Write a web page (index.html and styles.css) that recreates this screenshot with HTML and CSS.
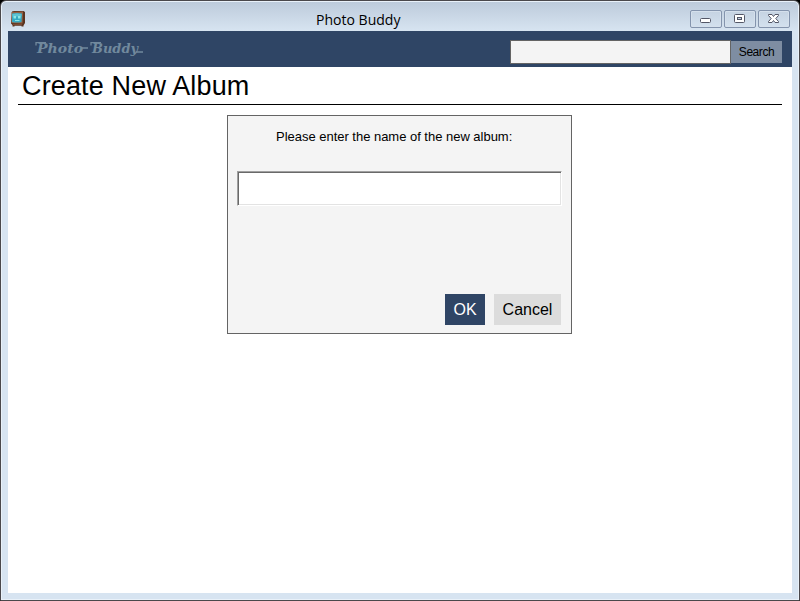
FILE: index.html
```html
<!DOCTYPE html>
<html lang="en">
<head>
<meta charset="utf-8">
<title>Photo Buddy</title>
<link rel="stylesheet" href="styles.css">
</head>
<body>
<div class="window">
  <div class="titlebar">
    <svg class="app-icon" width="16" height="18" viewBox="0 0 16 18">
      <path d="M2 1.500 L4 1 H13.500 L15 2 V13 L13.500 15.500 V16.500 H11.500 V15.800 H4.500 V16.500 H2.500 V15 L1 13.500Z" fill="#5a3420"/>
      <path d="M1.500 2 L13 1.500 L12.500 13.500 L1.500 13Z" fill="#966043"/>
      <path d="M2 3.500 Q7 2.500 12 3.500 L11.500 12 Q7 13 2 12Z" fill="#35a9c3"/>
      <path d="M2.500 4 Q7 3 11.500 4 L11.200 6.500 H2.500Z" fill="#5fc3d3"/>
      <path d="M3.500 6 H6 V8.500 H3.500Z M8 6 H10.500 V8.500 H8Z M5 10 H9.500 V11 H5Z" fill="#8de6e6"/>
      <path d="M3 14.500 H12" stroke="#7e4930"/>
    </svg>
    <div class="caption"><svg width="90" height="24"><text x="1" y="18" textLength="84.500" lengthAdjust="spacingAndGlyphs">Photo Buddy</text></svg></div>
    <div class="controls">
      <div class="control"><svg width="30" height="16"><rect x="9.500" y="7.500" width="10" height="4" rx="1" fill="#fff" stroke="#535666"/></svg></div>
      <div class="control"><svg width="30" height="16"><rect x="9.500" y="3.500" width="10" height="8" rx="1" fill="#fff" stroke="#535666"/><rect x="12.500" y="6.500" width="4" height="2" fill="#c4d3e5" stroke="#535666"/></svg></div>
      <div class="control"><svg width="30" height="16"><path d="M9.500 3.500 H13 L14.500 5.500 L16 3.500 H19.500 V4.500 L16.800 7.500 L19.500 10.500 V11.500 H16 L14.500 9.500 L13 11.500 H9.500 V10.500 L12.200 7.500 L9.500 4.500Z" fill="#fff" stroke="#535666"/></svg></div>
    </div>
  </div>
  <main class="client">
    <header class="header">
      <svg class="logo" width="112" height="24" viewBox="0 0 112 24">
        <text x="3" y="15" textLength="46" lengthAdjust="spacingAndGlyphs">Photo</text>
        <text x="58" y="15" textLength="46" lengthAdjust="spacingAndGlyphs">Buddy</text>
        <path d="M2 7.500 V4.700 H12 M47 10 H54 M57 7.500 V4.700 H67 M102 14 H109" fill="none" stroke="#71899d" stroke-width="1.300"/>
      </svg>
      <div class="search">
        <input class="query" type="text" aria-label="Search">
        <button class="go">Search</button>
      </div>
    </header>
    <h1 class="heading">Create New Album</h1>
    <section class="dialog">
      <label class="prompt" for="album">Please enter the name of the new album:</label>
      <input class="name" id="album" type="text">
      <div class="actions">
        <button class="button ok">OK</button>
        <button class="button cancel">Cancel</button>
      </div>
    </section>
  </main>
</div>
</body>
</html>
```
FILE: styles.css
```css
* { box-sizing: border-box; }
body {
  margin: 0;
  background: #000;
  font-family: "Liberation Sans", Arial, sans-serif;
  overflow: hidden;
}
.window {
  width: 800px;
  height: 601px;
  padding: 0 7px 7px;
  border: 1px solid #4a484b;
  border-radius: 6px 6px 0 0;
  background: linear-gradient(#bccada, #d7e4f1 30px);
  box-shadow: inset 0 0 0 1px #e9f1f9;
}
.titlebar {
  display: flex;
  height: 30px;
  align-items: flex-start;
}
.app-icon { margin: 9px 0 0 2px; }
.caption { margin: 6px 0 0 289px; height: 24px; }
.caption text { font: 15px "Open Sans", "Noto Sans", sans-serif; }
.controls {
  display: flex;
  gap: 2px;
  margin: 9px 2px 0 auto;
}
.control {
  width: 32px;
  height: 18px;
  border: 1px solid #8494ad;
  border-radius: 2px;
  box-shadow: inset 0 0 0 1px #d5e0ec;
}
.control svg { display: block; }
.client { height: 562px; background: #fff; }
.header {
  display: flex;
  height: 36px;
  justify-content: space-between;
  background: #2f4565;
}
.logo { margin: 7px 0 0 26px; }
.logo text {
  font: italic bold 13px "DejaVu Serif", serif;
  fill: #71899d;
}
.search { display: flex; margin: 9px 10px 0 0; }
.query {
  width: 221px;
  height: 24px;
  border: 1px solid #646464;
  background: #f4f4f4;
}
.go {
  width: 51px;
  height: 22px;
  margin-top: 1px;
  padding: 0;
  border: 0;
  background: #7e8da2;
  font: 12px "Liberation Sans", Arial, sans-serif;
  letter-spacing: -.45px;
}
.heading {
  height: 38px;
  margin: 0 10px;
  padding-left: 4px;
  border-bottom: 1px solid #000;
  font-size: 27px;
  font-weight: 400;
  line-height: 39px;
  letter-spacing: .15px;
}
.dialog {
  width: 345px;
  height: 219px;
  margin: 10px 0 0 219px;
  padding: 0 10px 0 9px;
  border: 1px solid #646464;
  background: #f4f4f4;
}
.prompt {
  display: block;
  height: 55px;
  padding: 13px 0 0 39px;
  font-size: 13px;
  line-height: 16px;
  letter-spacing: -.02px;
  white-space: nowrap;
}
.name {
  display: block;
  width: 325px;
  height: 35px;
  border: 1px solid;
  border-color: #a0a0a0 #fff #fff #a0a0a0;
  background: #fff;
  box-shadow: inset 1px 1px #696969, inset -1px -1px #e3e3e3;
}
.actions {
  display: flex;
  justify-content: flex-end;
  gap: 9px;
  margin-top: 88px;
}
.button {
  height: 31px;
  padding: 0;
  border: 0;
  font: 16px "Liberation Sans", Arial, sans-serif;
}
.ok { width: 40px; background: #2f4565; color: #fff; }
.cancel { width: 67px; background: #dcdcdc; color: #000; }
```
